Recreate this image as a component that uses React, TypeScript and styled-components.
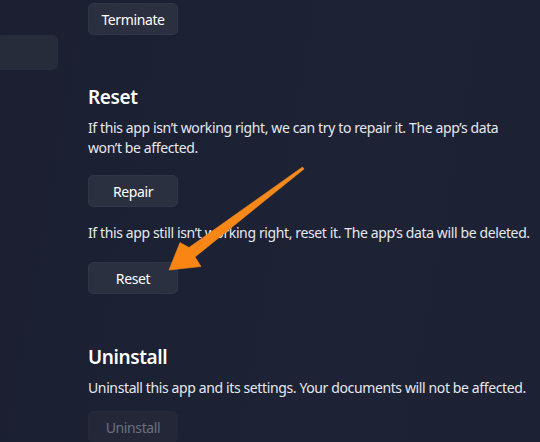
import styled, { createGlobalStyle } from "styled-components";

const GlobalStyle = createGlobalStyle`
  html, body {
    margin: 0;
    padding: 0;
    background: #1c2033;
    height: 100%;
    overflow: hidden;
  }
  body {
    font-family: "Noto Sans", "Open Sans", sans-serif;
    color: #e8eaf0;
  }
`;

const Page = styled.div`
  position: relative;
  width: 540px;
  height: 442px;
  display: grid;
  grid-template-columns: 58px 1fr;
  column-gap: 30px;
  background: linear-gradient(100deg, #1b1f31 0%, #1d2235 60%, #1c2134 100%);
  overflow: hidden;
`;

const Sidebar = styled.div`
  padding-top: 35px;
`;

const NavItem = styled.div`
  height: 35px;
  background: #272c3b;
  border-radius: 0 5px 5px 0;
`;

const Content = styled.div`
  padding-top: 3px;
  display: flex;
  flex-direction: column;
`;

const Section = styled.section<{ top: number }>`
  margin-top: ${(p) => p.top}px;
  display: flex;
  flex-direction: column;
  align-items: flex-start;
`;

const Heading = styled.h2`
  margin: 0;
  font-size: 19px;
  line-height: 28px;
  font-weight: 600;
  letter-spacing: -0.4px;
  color: #ffffff;
`;

const Text = styled.p<{ gap: number }>`
  margin: ${(p) => p.gap}px 0 0;
  font-size: 14px;
  line-height: 20px;
  letter-spacing: -0.38px;
  white-space: nowrap;
  color: #e6e8ee;
`;

const Button = styled.button<{ gap: number; disabled?: boolean }>`
  margin-top: ${(p) => p.gap}px;
  width: 90px;
  height: 32px;
  border-radius: 5px;
  border: 1px solid ${(p) => (p.disabled ? "#252a3b" : "#30354a")};
  background: ${(p) => (p.disabled ? "#232738" : "#2b3040")};
  color: ${(p) => (p.disabled ? "#6c7182" : "#ffffff")};
  font-family: inherit;
  font-size: 14px;
  letter-spacing: -0.38px;
  padding: 0;
  cursor: pointer;
`;

const Overlay = styled.svg`
  position: absolute;
  left: 0;
  top: 0;
  pointer-events: none;
`;

const Arrow = () => (
  <Overlay width="540" height="442" viewBox="0 0 540 442">
    <defs>
      <linearGradient id="arrowFill" x1="303" y1="168" x2="170" y2="269" gradientUnits="userSpaceOnUse">
        <stop offset="0" stopColor="#f58a1f" />
        <stop offset="1" stopColor="#f98512" />
      </linearGradient>
    </defs>
    <path
      d="M302.5 167 L189 247.5 L180 242.5 L169 270 L201 266.5 L195 257 L304 169 Z"
      fill="url(#arrowFill)"
      stroke="#f58a1f"
      strokeWidth="0.6"
      strokeLinejoin="round"
    />
  </Overlay>
);

export default function App() {
  return (
    <>
      <GlobalStyle />
      <Page>
        <Sidebar>
          <NavItem />
        </Sidebar>
        <Content>
          <Button gap={0}>Terminate</Button>
          <Section top={48}>
            <Heading>Reset</Heading>
            <Text gap={7}>
              If this app isn’t working right, we can try to repair it. The app’s data
              <br />
              won’t be affected.
            </Text>
            <Button gap={17}>Repair</Button>
            <Text gap={16}>If this app still isn’t working right, reset it. The app’s data will be deleted.</Text>
            <Button gap={19}>Reset</Button>
          </Section>
          <Section top={49}>
            <Heading>Uninstall</Heading>
            <Text gap={7}>Uninstall this app and its settings. Your documents will not be affected.</Text>
            <Button gap={13} disabled>
              Uninstall
            </Button>
          </Section>
        </Content>
        <Arrow />
      </Page>
    </>
  );
}
